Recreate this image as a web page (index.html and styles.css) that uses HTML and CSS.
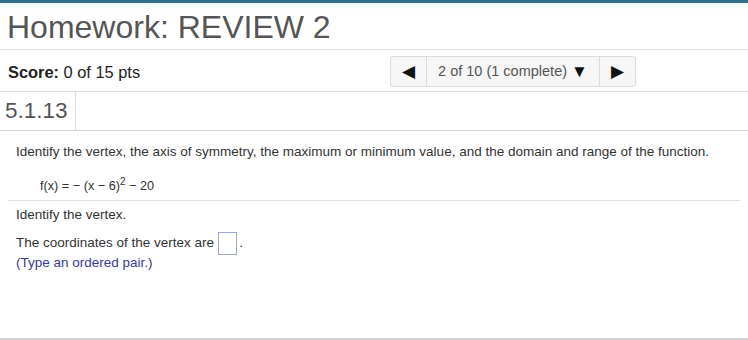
FILE: index.html
```html
<!DOCTYPE html>
<html lang="en">
<head>
  <meta charset="UTF-8" />
  <title>Homework: REVIEW 2</title>
  <link rel="stylesheet" href="styles.css">
</head>
<body>
  <div class="hw-page">
    <div class="hw-header">
      <h1 class="hw-title">Homework: REVIEW 2</h1>
    </div>

    <div class="hw-score-row">
      <div class="hw-score"><b>Score:</b> 0 of 15 pts</div>
      <div class="hw-nav">
        <button class="hw-nav-btn hw-nav-arrow">&#9664;</button>
        <button class="hw-nav-btn hw-nav-select">2 of 10 (1 complete) <span class="hw-caret">&#9660;</span></button>
        <button class="hw-nav-btn hw-nav-arrow">&#9654;</button>
      </div>
    </div>

    <div class="hw-qnum-row">
      <div class="hw-qnum">5.1.13</div>
      <div class="hw-qnum-rest"></div>
    </div>

    <div class="hw-question">
      <p class="hw-prompt">Identify the vertex, the axis of symmetry, the maximum or minimum value, and the domain and range of the function.</p>
      <p class="hw-formula">f(x) = &minus; (x &minus; 6)<sup>2</sup> &minus; 20</p>
    </div>

    <div class="hw-answer">
      <p class="hw-step">Identify the vertex.</p>
      <p class="hw-line">The coordinates of the vertex are <span class="hw-input"></span>.</p>
      <p class="hw-hint">(Type an ordered pair.)</p>
    </div>
  </div>
</body>
</html>
```

FILE: styles.css
```css
* {
  box-sizing: border-box;
}

body {
  margin: 0;
  font-family: "Liberation Sans", Arial, sans-serif;
  background: #fff;
  color: #222;
}

.hw-page {
  height: 340px;
  border-top: 3px solid #2f6f88;
  border-bottom: 2px solid #d4d4d4;
  display: flex;
  flex-direction: column;
}

.hw-header {
  height: 47px;
  padding: 6px 0 0 7px;
  border-bottom: 1px solid #e6e6e6;
  background: linear-gradient(#eef6f9, #fff 7px);
}

.hw-title {
  margin: 0;
  font-size: 32px;
  font-weight: normal;
  color: #555;
  line-height: 36px;
}

.hw-score-row {
  height: 42px;
  display: flex;
  align-items: center;
  padding-left: 8px;
  border-bottom: 1px solid #dcdcdc;
}

.hw-score {
  width: 382px;
  padding-top: 3px;
  font-size: 16.4px;
  color: #222;
}

.hw-nav {
  display: flex;
  height: 31px;
  margin-top: 2px;
  border: 1px solid #dcdcdc;
  border-radius: 3px;
  background: #f6f6f6;
}

.hw-nav-btn {
  border: none;
  background: transparent;
  font-family: inherit;
  padding: 0;
  color: #111;
}

.hw-nav-arrow {
  width: 35px;
  font-size: 17px;
}

.hw-nav-select {
  width: 174px;
  font-size: 14.5px;
  color: #555;
  border-left: 1px solid #dcdcdc;
  border-right: 1px solid #dcdcdc;
}

.hw-caret {
  color: #111;
  font-size: 17px;
  vertical-align: -1px;
}

.hw-qnum-row {
  height: 39px;
  display: flex;
  border-bottom: 1px solid #d4d4d4;
}

.hw-qnum {
  width: 76px;
  padding-left: 5px;
  display: flex;
  align-items: center;
  font-size: 22.5px;
  color: #555;
  border-right: 1px solid #dcdcdc;
}

.hw-question {
  margin: 0 8px;
  padding: 13px 0 0 8px;
  height: 70px;
  border-bottom: 1px solid #e0e0e0;
}

.hw-prompt {
  margin: 0;
  font-size: 13.5px;
  line-height: 15.5px;
  color: #333;
}

.hw-formula {
  margin: 14px 0 0 24px;
  font-size: 12.7px;
  line-height: 15.5px;
  color: #333;
}

.hw-formula sup {
  font-size: 10px;
}

.hw-answer {
  padding: 6px 0 0 16px;
  font-size: 13.5px;
  line-height: 15.5px;
  color: #333;
}

.hw-step {
  margin: 0 0 9px;
}

.hw-line {
  margin: 0;
  display: flex;
  align-items: center;
}

.hw-input {
  display: inline-block;
  width: 19px;
  height: 23px;
  margin: 0 2px 0 4px;
  border: 1px solid #9fa8d4;
}

.hw-hint {
  margin: 0;
  color: #3a3a9a;
}
```
